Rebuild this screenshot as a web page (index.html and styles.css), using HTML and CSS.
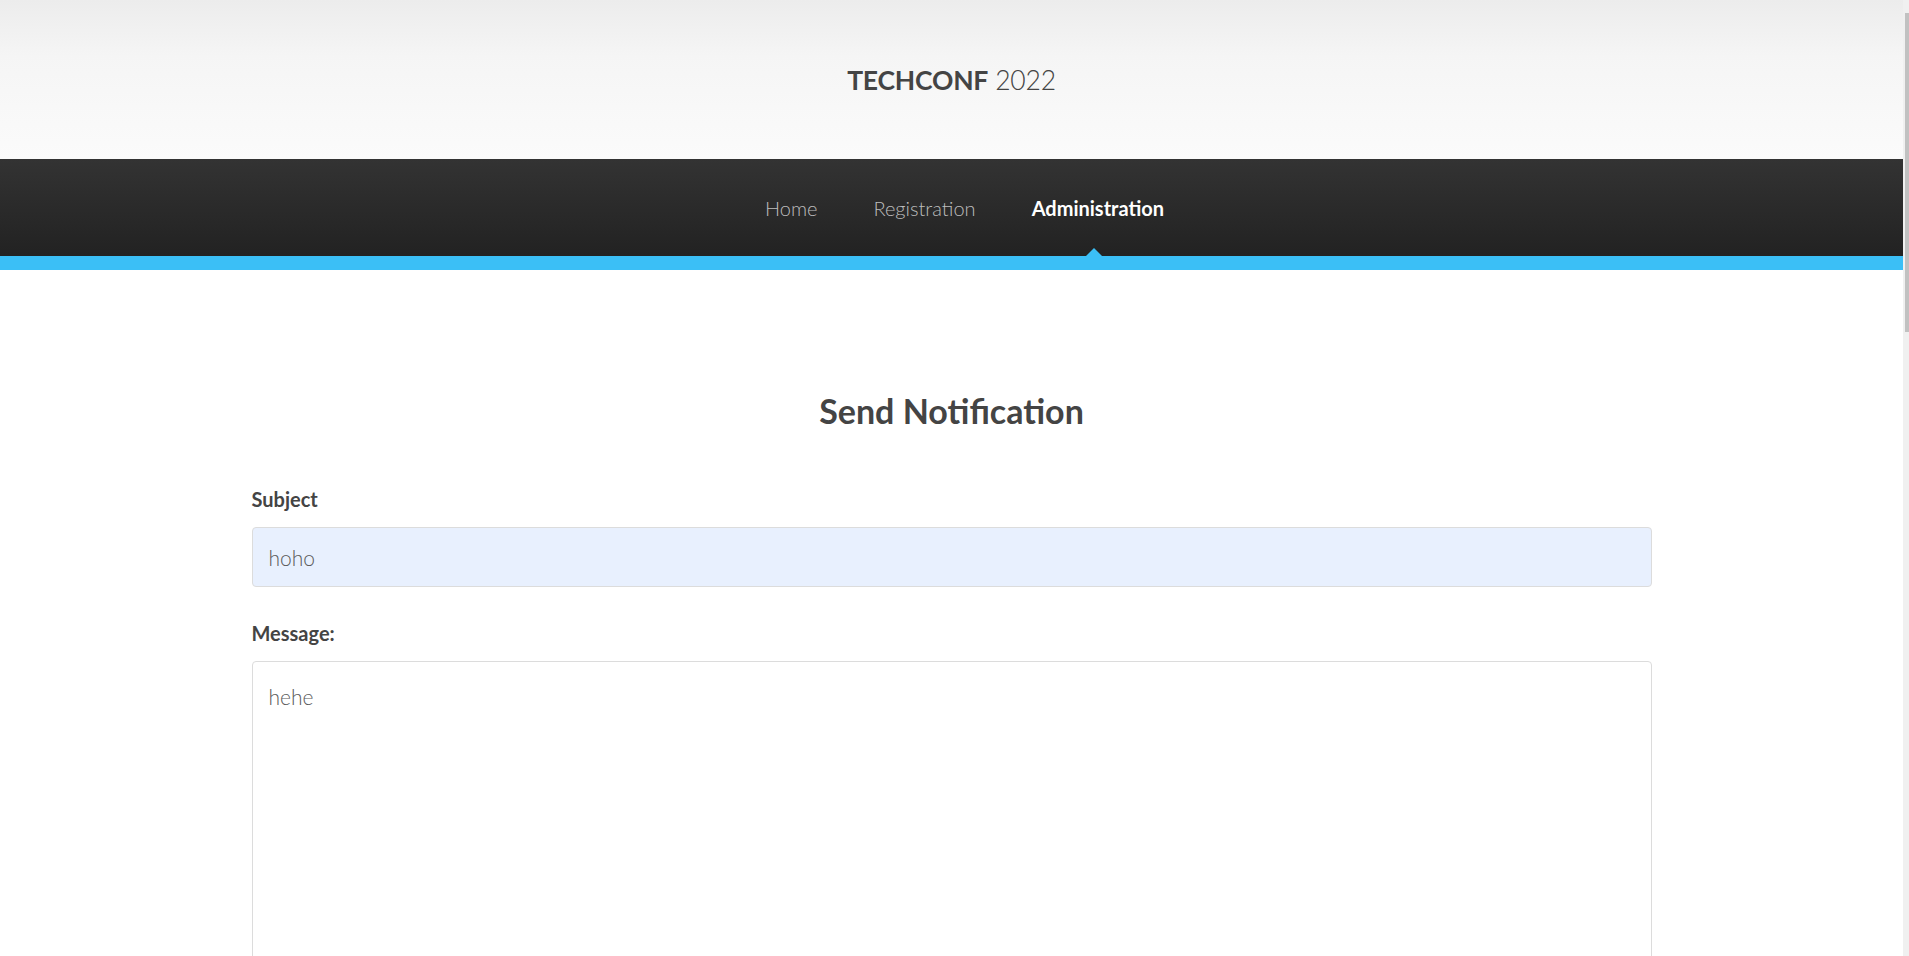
FILE: index.html
```html
<!DOCTYPE html>
<html lang="en">
<head>
<meta charset="utf-8">
<title>TECHCONF 2022 - Send Notification</title>
<link rel="stylesheet" href="styles.css">
</head>
<body>
<div class="window">
  <div class="page">
    <header class="site-header">
      <h1 class="brand"><strong>TECHCONF</strong> 2022</h1>
    </header>
    <nav class="main-nav">
      <ul class="nav-list">
        <li class="nav-item"><a href="#">Home</a></li>
        <li class="nav-item"><a href="#">Registration</a></li>
        <li class="nav-item active"><a href="#">Administration</a></li>
      </ul>
    </nav>
    <div class="accent-bar"></div>
    <main class="content">
      <h2 class="page-title">Send Notification</h2>
      <form class="notify-form">
        <div class="field">
          <label class="field-label" for="subject">Subject</label>
          <input class="field-input autofilled" id="subject" type="text" value="hoho">
        </div>
        <div class="field">
          <label class="field-label" for="message">Message:</label>
          <textarea class="field-textarea" id="message">hehe</textarea>
        </div>
        <button class="submit-btn" type="button">Send</button>
      </form>
    </main>
  </div>
  <div class="scroll-track" aria-hidden="true">
    <div class="scroll-thumb"></div>
  </div>
</div>
</body>
</html>
```
FILE: styles.css
```css
body {
  margin: 0;
  font-family: "Lato", "Open Sans", sans-serif;
  color: #444;
  background: #fff;
}
.window {
  display: flex;
  align-items: stretch;
}
.page {
  flex: 1;
  min-width: 0;
}
.scroll-track {
  width: 6px;
  flex: none;
  background: #f0f0f0;
  padding-top: 13px;
  box-sizing: border-box;
}
.scroll-thumb {
  margin-left: 2px;
  height: 319px;
  background: #c1c1c1;
}
.site-header {
  height: 159px;
  display: flex;
  align-items: center;
  justify-content: center;
  background: linear-gradient(#ececec 0%, #f5f5f5 35%, #fbfbfb 100%);
}
.brand {
  margin: 0;
  font-size: 26.5px;
  font-weight: 300;
  color: #444;
  letter-spacing: -0.2px;
}
.brand strong {
  font-weight: 700;
}
.main-nav {
  height: 97px;
  background: linear-gradient(#333333, #222222);
}
.nav-list {
  list-style: none;
  margin: 0 0 0 26px;
  padding: 0;
  height: 100%;
  display: flex;
  justify-content: center;
  align-items: stretch;
}
.nav-item {
  position: relative;
  display: flex;
  align-items: center;
  padding: 0 28px;
}
.nav-item a {
  color: #bdbdbd;
  text-decoration: none;
  font-size: 20px;
  font-weight: 300;
}
.nav-item.active a {
  color: #fff;
  font-weight: 700;
}
.nav-item.active::after {
  content: "";
  position: absolute;
  left: 50%;
  bottom: 0;
  margin-left: -12px;
  border-left: 8px solid transparent;
  border-right: 8px solid transparent;
  border-bottom: 8px solid #3bbff6;
}
.accent-bar {
  height: 14px;
  background: #3bbff6;
}
.content {
  max-width: 1400px;
  margin: 0 auto;
  padding: 118px 0 0;
  min-height: 2530px;
  box-sizing: border-box;
}
.page-title {
  margin: 0 0 52px;
  text-align: center;
  font-size: 34px;
  font-weight: 700;
  color: #444;
  line-height: 46px;
}
.notify-form {
  display: flex;
  flex-direction: column;
  gap: 33px;
}
.field {
  display: flex;
  flex-direction: column;
  gap: 15px;
}
.field-label {
  font-size: 20px;
  font-weight: 700;
  color: #444;
  line-height: 26px;
}
.field-input,
.field-textarea {
  box-sizing: border-box;
  width: 100%;
  border: 1px solid #dcdcdc;
  border-radius: 4px;
  font-family: inherit;
  font-size: 21px;
  font-weight: 300;
  color: #5a5a5a;
  padding: 0 16px;
  outline: none;
}
.field-input {
  height: 60px;
}
.autofilled {
  background: #e8f0fe;
}
.field-textarea {
  height: 420px;
  padding-top: 22px;
  resize: vertical;
  background: #fff;
}
.submit-btn {
  align-self: flex-start;
  padding: 14px 36px;
  border: 0;
  border-radius: 4px;
  background: #3bbff6;
  color: #fff;
  font-family: inherit;
  font-size: 18px;
  font-weight: 700;
}
```
